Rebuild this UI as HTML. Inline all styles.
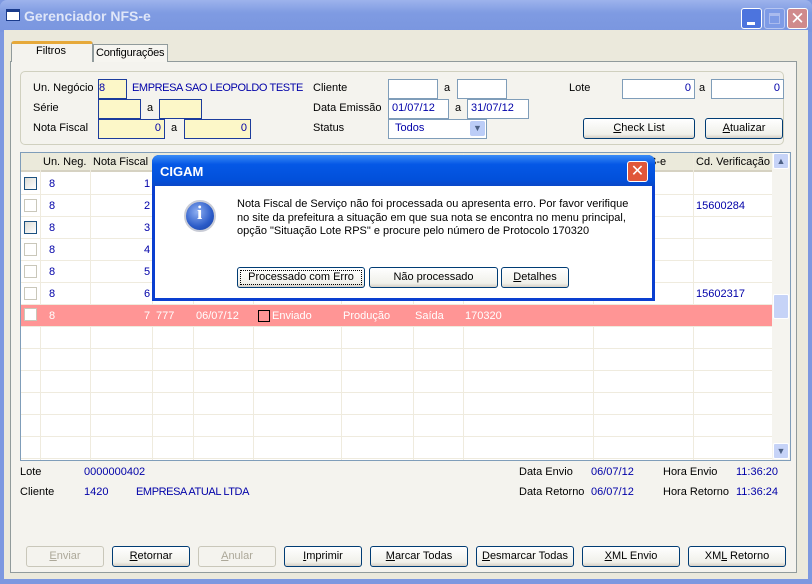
<!DOCTYPE html>
<html><head><meta charset="utf-8"><style>
*{margin:0;padding:0;box-sizing:border-box}
body{width:812px;height:584px;overflow:hidden;background:#7d98e0;font-family:"Liberation Sans","DejaVu Sans",sans-serif;font-size:11px;color:#000;position:relative}
.a{position:absolute}
.tb{left:0;top:0;width:812px;height:32px;background:linear-gradient(#9db3ec,#7f9be2 40%,#7a96df);border-radius:7px 7px 0 0}
.client{left:4px;top:30px;width:804px;height:549px;background:#ebe9dc}
.panel{left:10px;top:61px;width:787px;height:512px;background:#f4f3ee;border:1px solid #919b9c}
.t{position:absolute;white-space:nowrap}
.blue{color:#0000a8}
.up{letter-spacing:-0.4px}
.in{position:absolute;height:20px;border:1px solid #7f9db9;background:#fff;text-align:right;padding:2px 3px;color:#0000a8}
.y{background:#fcf7c8;border:1px solid #1c3c9c}
.btn{position:absolute;height:21px;border:1px solid #003c74;border-radius:3px;background:linear-gradient(#fff,#f0f0ea 80%,#d6d0c5);text-align:center;line-height:19px;font-size:11px}
.dis{border-color:#c9c7ba;color:#aca899;background:#f4f3ee}
.grid{left:20px;top:152px;width:771px;height:309px;background:#fff;border:1px solid #7f9db9;overflow:hidden}
.row{position:absolute;left:0;width:751px;height:22px;border-bottom:1px solid #efebde}
.vl{position:absolute;top:0;width:1px;height:309px;background:#efebde}
.cb{position:absolute;left:3px;width:13px;height:13px;border:1px solid #c9c7ba;background:#fff}
.cbd{border-color:#1c5180;background:linear-gradient(135deg,#dcdcd6,#fff)}
u{text-decoration:underline}
</style></head><body>
<div class="a tb"></div>
<div class="a" style="left:6px;top:9px;width:14px;height:12px;border:1px solid #1a3b8c;border-top:3px solid #1a3b8c;background:#fff"></div>
<div class="t" style="left:24px;top:8px;font-size:14px;font-weight:bold;color:#dfe6f8">Gerenciador NFS-e</div>
<div class="a" style="left:741px;top:8px;width:21px;height:21px;border:1px solid #fff;border-radius:3px;background:#4c74de"><div class="a" style="left:5px;top:13px;width:8px;height:3px;background:#fff"></div></div>
<div class="a" style="left:764px;top:8px;width:21px;height:21px;border:1px solid #b7c6f1;border-radius:3px;background:#7e9be6"><div class="a" style="left:4px;top:4px;width:11px;height:11px;border:1px solid #aabbee;border-top-width:3px"></div></div>
<div class="a" style="left:787px;top:8px;width:21px;height:21px;border:1px solid #fff;border-radius:3px;background:#d08a8c;color:#fff;font-size:17px;font-weight:bold;text-align:center;line-height:19px">✕</div>
<div class="a client"></div>
<div class="a panel"></div>
<div class="a" style="left:11px;top:41px;width:82px;height:21px;background:#f4f3ee;border:1px solid #919b9c;border-bottom:none;border-top:3px solid #e6a93a;border-radius:3px 3px 0 0"></div>
<div class="t" style="left:36px;top:45px">Filtros</div>
<div class="a" style="left:93px;top:44px;width:75px;height:18px;background:#f6f5f0;border:1px solid #919b9c;border-bottom:none"></div>
<div class="t" style="left:96px;top:47px;letter-spacing:-0.2px">Configurações</div>
<div class="a" style="left:20px;top:71px;width:764px;height:74px;border:1px solid #d0d0bf;border-radius:5px"></div>
<div class="t" style="left:33px;top:82px">Un. Negócio</div>
<div class="in y" style="left:98px;top:79px;width:29px;text-align:left;padding-left:0">8</div>
<div class="t blue up" style="left:132px;top:82px">EMPRESA SAO LEOPOLDO TESTE</div>
<div class="t" style="left:33px;top:102px">Série</div>
<div class="in y" style="left:98px;top:99px;width:43px"></div>
<div class="t" style="left:147px;top:102px">a</div>
<div class="in y" style="left:159px;top:99px;width:43px"></div>
<div class="t" style="left:33px;top:122px">Nota Fiscal</div>
<div class="in y" style="left:98px;top:119px;width:67px">0</div>
<div class="t" style="left:171px;top:122px">a</div>
<div class="in y" style="left:184px;top:119px;width:67px">0</div>
<div class="t" style="left:313px;top:82px">Cliente</div>
<div class="in" style="left:388px;top:79px;width:50px"></div>
<div class="t" style="left:444px;top:82px">a</div>
<div class="in" style="left:457px;top:79px;width:50px"></div>
<div class="t" style="left:313px;top:102px">Data Emissão</div>
<div class="in" style="left:388px;top:99px;width:61px;text-align:left">01/07/12</div>
<div class="t" style="left:455px;top:102px">a</div>
<div class="in" style="left:467px;top:99px;width:62px;text-align:left">31/07/12</div>
<div class="t" style="left:313px;top:122px">Status</div>
<div class="in" style="left:388px;top:119px;width:99px;text-align:left;padding-left:6px">Todos</div>
<div class="a" style="left:470px;top:121px;width:15px;height:15px;background:#bccdf7;border-radius:2px;color:#4d6185;font-size:9px;text-align:center;line-height:15px">▼</div>
<div class="t" style="left:569px;top:82px">Lote</div>
<div class="in" style="left:622px;top:79px;width:73px">0</div>
<div class="t" style="left:699px;top:82px">a</div>
<div class="in" style="left:711px;top:79px;width:73px">0</div>
<div class="btn" style="left:583px;top:118px;width:112px"><u>C</u>heck List</div>
<div class="btn" style="left:705px;top:118px;width:78px"><u>A</u>tualizar</div>

<div class="a grid">
<div class="a" style="left:0;top:0;width:751px;height:19px;background:#ebeadb;border-bottom:2px solid #d6d2c2"></div>
<div class="vl" style="left:19px"></div><div class="vl" style="left:69px"></div><div class="vl" style="left:131px"></div><div class="vl" style="left:172px"></div><div class="vl" style="left:232px"></div><div class="vl" style="left:320px"></div><div class="vl" style="left:392px"></div><div class="vl" style="left:442px"></div><div class="vl" style="left:572px"></div><div class="vl" style="left:672px"></div>
<div class="t" style="left:22px;top:3px">Un. Neg.</div>
<div class="t" style="left:72px;top:3px">Nota Fiscal</div>
<div class="t" style="left:628px;top:3px">S-e</div>
<div class="t" style="left:675px;top:3px">Cd. Verificação</div>
<div class="row" style="top:20px"><div class="cb cbd" style="top:4px"></div><div class="t blue" style="left:28px;top:5px">8</div><div class="t blue" style="left:123px;top:5px">1</div></div>
<div class="row" style="top:42px"><div class="cb" style="top:4px"></div><div class="t blue" style="left:28px;top:5px">8</div><div class="t blue" style="left:123px;top:5px">2</div><div class="t blue" style="left:675px;top:5px">15600284</div></div>
<div class="row" style="top:64px"><div class="cb cbd" style="top:4px"></div><div class="t blue" style="left:28px;top:5px">8</div><div class="t blue" style="left:123px;top:5px">3</div></div>
<div class="row" style="top:86px"><div class="cb" style="top:4px"></div><div class="t blue" style="left:28px;top:5px">8</div><div class="t blue" style="left:123px;top:5px">4</div></div>
<div class="row" style="top:108px"><div class="cb" style="top:4px"></div><div class="t blue" style="left:28px;top:5px">8</div><div class="t blue" style="left:123px;top:5px">5</div></div>
<div class="row" style="top:130px"><div class="cb" style="top:4px"></div><div class="t blue" style="left:28px;top:5px">8</div><div class="t blue" style="left:123px;top:5px">6</div><div class="t blue" style="left:675px;top:5px">15602317</div></div>
<div class="row" style="top:152px;background:#ff9595;color:#fff"><div class="cb" style="top:3px"></div><div class="t" style="left:28px;top:5px">8</div><div class="t" style="left:123px;top:5px">7</div><div class="t" style="left:135px;top:5px">777</div><div class="t" style="left:175px;top:5px">06/07/12</div><div class="a" style="left:237px;top:5px;width:12px;height:12px;border:1px solid #000"></div><div class="t" style="left:251px;top:5px">Enviado</div><div class="t" style="left:322px;top:5px">Produção</div><div class="t" style="left:394px;top:5px">Saída</div><div class="t" style="left:444px;top:5px">170320</div></div>
<div class="row" style="top:174px"></div><div class="row" style="top:196px"></div><div class="row" style="top:218px"></div><div class="row" style="top:240px"></div><div class="row" style="top:262px"></div><div class="row" style="top:284px"></div>
<div class="a" style="left:751px;top:0;width:18px;height:307px;background:#f5f4ef"></div>
<div class="a" style="left:752px;top:0;width:16px;height:16px;background:#c6d3f7;border:1px solid #fff;border-radius:2px;color:#4d6185;font-size:9px;text-align:center;line-height:14px">▲</div>
<div class="a" style="left:752px;top:141px;width:16px;height:25px;background:#c6d3f7;border:1px solid #fff;border-radius:2px"></div>
<div class="a" style="left:752px;top:290px;width:16px;height:16px;background:#c6d3f7;border:1px solid #fff;border-radius:2px;color:#4d6185;font-size:9px;text-align:center;line-height:14px">▼</div>
</div>

<div class="t" style="left:20px;top:466px">Lote</div>
<div class="t blue" style="left:84px;top:466px">0000000402</div>
<div class="t" style="left:20px;top:486px">Cliente</div>
<div class="t blue" style="left:84px;top:486px">1420</div>
<div class="t blue up" style="left:136px;top:486px">EMPRESA ATUAL LTDA</div>
<div class="t" style="left:519px;top:466px">Data Envio</div>
<div class="t blue" style="left:591px;top:466px">06/07/12</div>
<div class="t" style="left:663px;top:466px">Hora Envio</div>
<div class="t blue" style="left:736px;top:466px">11:36:20</div>
<div class="t" style="left:519px;top:486px">Data Retorno</div>
<div class="t blue" style="left:591px;top:486px">06/07/12</div>
<div class="t" style="left:663px;top:486px">Hora Retorno</div>
<div class="t blue" style="left:736px;top:486px">11:36:24</div>

<div class="btn dis" style="left:26px;top:546px;width:78px"><u>E</u>nviar</div>
<div class="btn" style="left:112px;top:546px;width:78px"><u>R</u>etornar</div>
<div class="btn dis" style="left:198px;top:546px;width:78px"><u>A</u>nular</div>
<div class="btn" style="left:284px;top:546px;width:78px"><u>I</u>mprimir</div>
<div class="btn" style="left:370px;top:546px;width:98px"><u>M</u>arcar Todas</div>
<div class="btn" style="left:476px;top:546px;width:98px"><u>D</u>esmarcar Todas</div>
<div class="btn" style="left:582px;top:546px;width:98px"><u>X</u>ML Envio</div>
<div class="btn" style="left:688px;top:546px;width:98px">XM<u>L</u> Retorno</div>

<div class="a" style="left:152px;top:155px;width:503px;height:146px;background:#0a3fd0;border-radius:7px 7px 0 0"></div>
<div class="a" style="left:152px;top:155px;width:503px;height:31px;background:linear-gradient(#3b8cf6,#0558e6 30%,#0250da 80%,#0a48c8);border-radius:7px 7px 0 0"></div>
<div class="t" style="left:160px;top:164px;font-size:13px;font-weight:bold;color:#fff">CIGAM</div>
<div class="a" style="left:627px;top:161px;width:21px;height:21px;border:1px solid #fff;border-radius:3px;background:#e0573a;color:#fff;font-size:16px;font-weight:bold;text-align:center;line-height:19px">✕</div>
<div class="a" style="left:155px;top:186px;width:497px;height:112px;background:#fff"></div>
<div class="a" style="left:184px;top:200px;width:32px;height:32px;border-radius:50%;background:radial-gradient(circle at 40% 35%,#8fb0f2,#2b5bc8 60%,#183f9c);border:2px solid #c9ccd6"></div>
<div class="t" style="left:197px;top:203px;color:#fff;font-weight:bold;font-size:19px;font-family:'Liberation Serif',serif">i</div>
<div class="t" style="left:237px;top:198px;font-size:11px;line-height:13.5px">Nota Fiscal de Serviço não foi processada ou apresenta erro. Por favor verifique<br>no site da prefeitura a situação em que sua nota se encontra no menu principal,<br>opção "Situação Lote RPS" e procure pelo número de Protocolo 170320</div>
<div class="btn" style="left:237px;top:267px;width:128px;outline:1px dotted #000;outline-offset:-4px">Processado com Erro</div>
<div class="btn" style="left:369px;top:267px;width:129px">Não processado</div>
<div class="btn" style="left:501px;top:267px;width:68px"><u>D</u>etalhes</div>
</body></html>
